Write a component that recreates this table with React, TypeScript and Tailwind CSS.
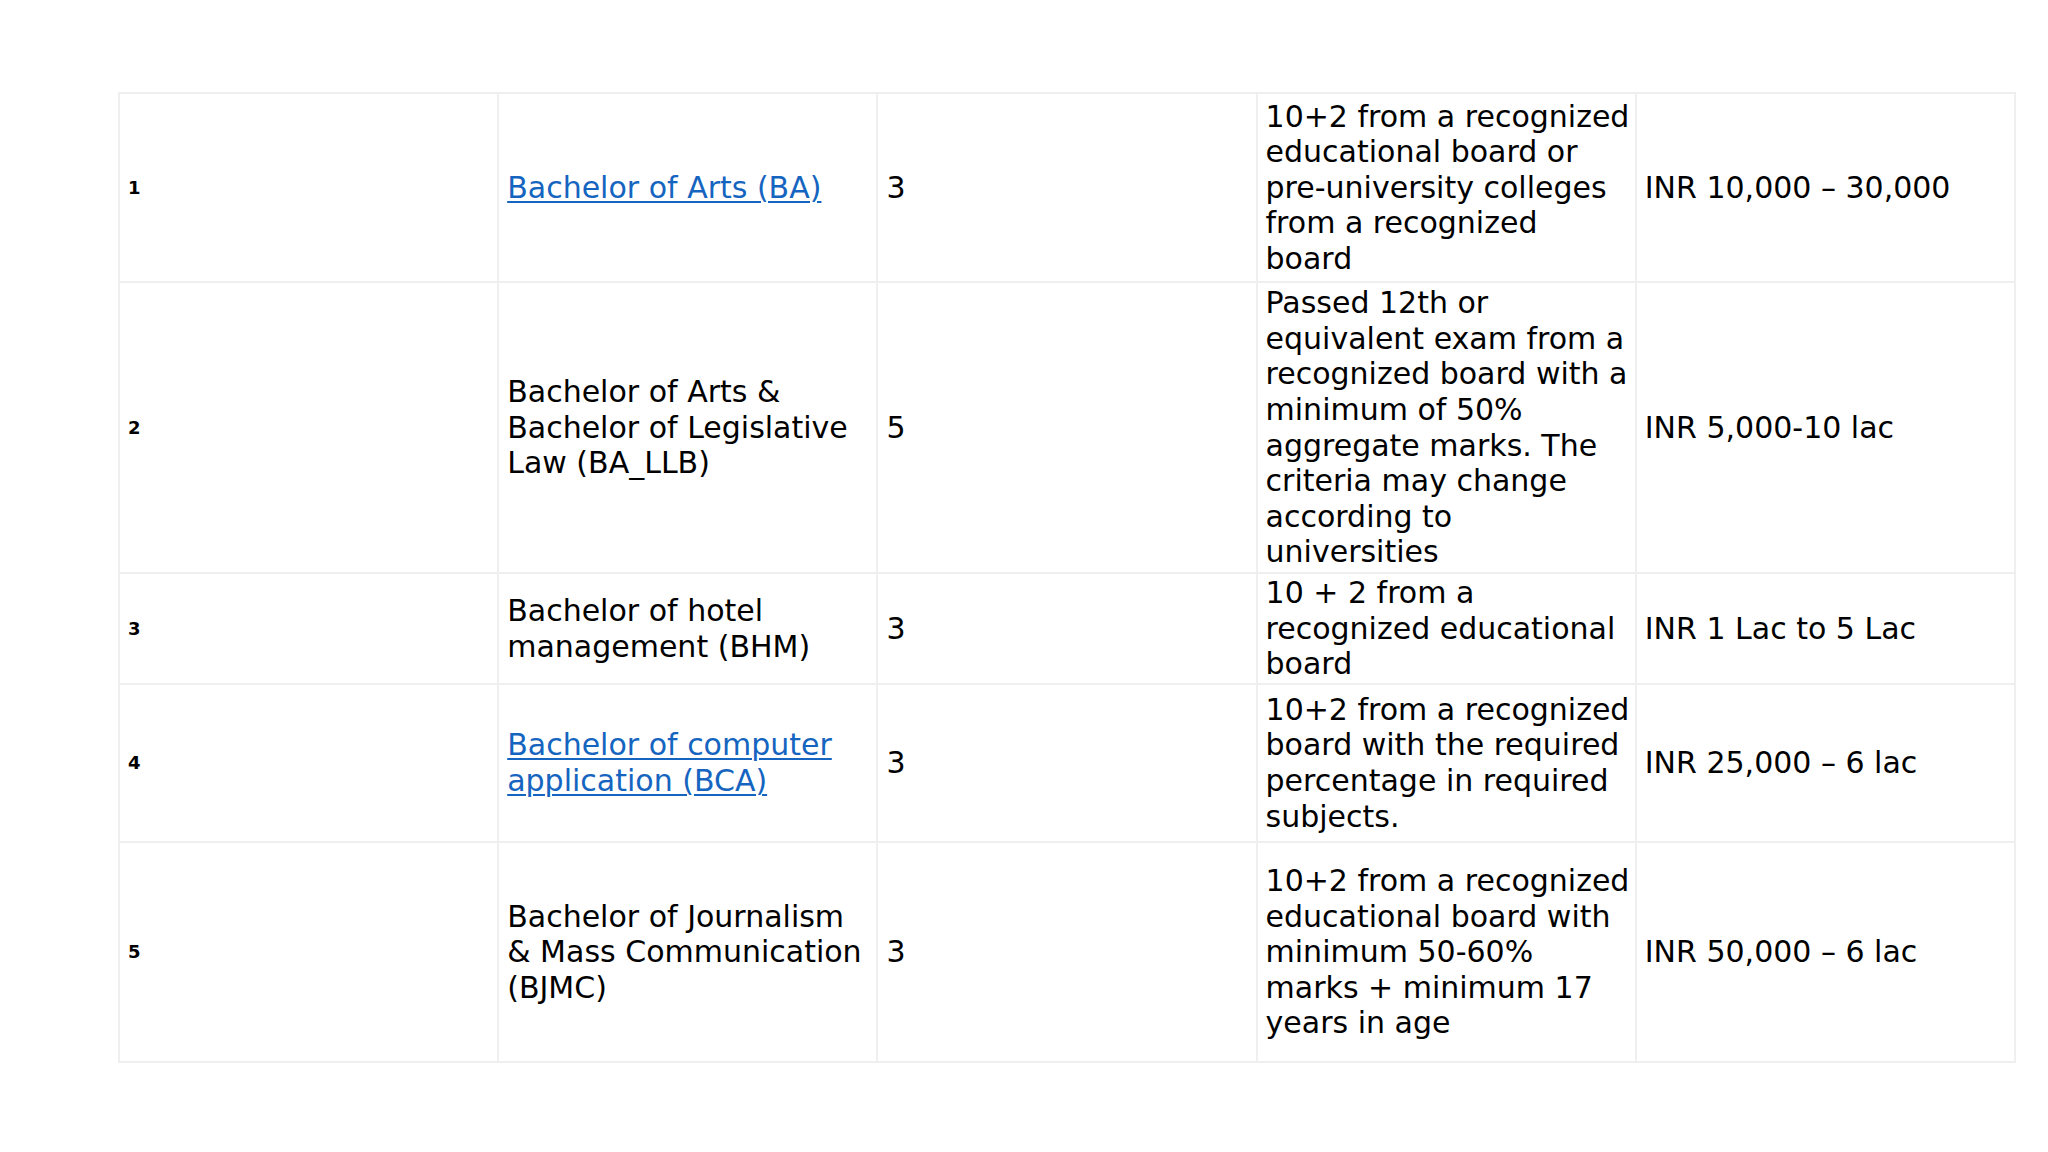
type Course = {
  no: number;
  name: string;
  link?: boolean;
  years: string;
  eligibility: string;
  fees: string;
  height: string;
};

const courses: Course[] = [
  {
    no: 1,
    name: 'Bachelor of Arts (BA)',
    link: true,
    years: '3',
    eligibility: '10+2 from a recognized educational board or pre-university colleges from a recognized board',
    fees: 'INR 10,000 – 30,000',
    height: 'h-[189px]',
  },
  {
    no: 2,
    name: 'Bachelor of Arts & Bachelor of Legislative Law (BA_LLB)',
    years: '5',
    eligibility:
      'Passed 12th or equivalent exam from a recognized board with a minimum of 50% aggregate marks. The criteria may change according to universities',
    fees: 'INR 5,000-10 lac',
    height: 'h-[291px]',
  },
  {
    no: 3,
    name: 'Bachelor of hotel management (BHM)',
    years: '3',
    eligibility: '10 + 2 from a recognized educational board',
    fees: 'INR 1 Lac to 5 Lac',
    height: 'h-[111px]',
  },
  {
    no: 4,
    name: 'Bachelor of computer application (BCA)',
    link: true,
    years: '3',
    eligibility: '10+2 from a recognized board with the required percentage in required subjects.',
    fees: 'INR 25,000 – 6 lac',
    height: 'h-[158px]',
  },
  {
    no: 5,
    name: 'Bachelor of Journalism & Mass Communication (BJMC)',
    years: '3',
    eligibility: '10+2 from a recognized educational board with minimum 50-60% marks + minimum 17 years in age',
    fees: 'INR 50,000 – 6 lac',
    height: 'h-[220px]',
  },
];

const cell = 'border-2 border-[#efefef] pl-[8px] pr-[2px] py-0 align-middle text-left';

export default function App() {
  return (
    <div className="min-h-[1152px] w-[2048px] bg-white pt-[92px] pl-[118px] font-['DejaVu_Sans',Verdana,sans-serif] text-black">
      <table className="w-[1898px] table-fixed border-collapse text-[30px] leading-[35.6px]">
        <tbody>
          {courses.map((c) => (
            <tr key={c.no} className={c.height}>
              <td className={`${cell} text-[18px] font-bold`}>{c.no}</td>
              <td className={cell}>
                {c.link ? (
                  <a href="#" className="text-[#1565c0] underline decoration-2 underline-offset-[3px]">
                    {c.name}
                  </a>
                ) : (
                  c.name
                )}
              </td>
              <td className={cell}>{c.years}</td>
              <td className={cell}>{c.eligibility}</td>
              <td className={cell}>{c.fees}</td>
            </tr>
          ))}
        </tbody>
      </table>
    </div>
  );
}
